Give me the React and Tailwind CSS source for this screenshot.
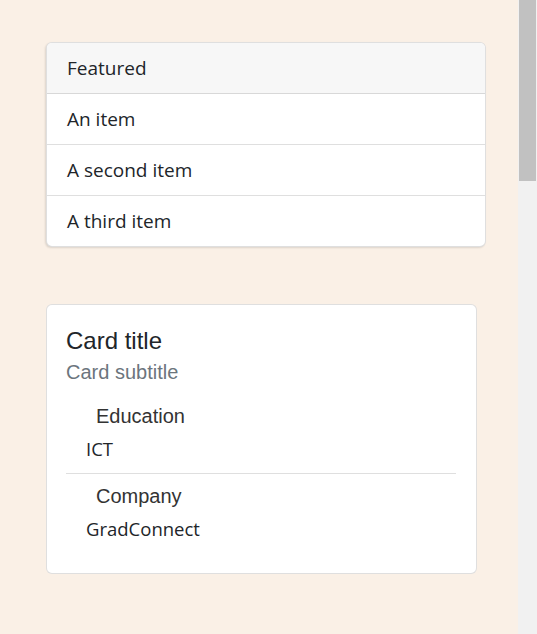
import React from 'react';

const items = ['An item', 'A second item', 'A third item'];

const segoe = { fontFamily: '"Open Sans", "Noto Sans", sans-serif' };

export default function App() {
  return (
    <div className="h-[634px] flex overflow-hidden">
      <main className="flex-1 bg-[#faf0e6] pt-[42px] pl-[46px]">
        <div className="w-[440px] rounded-md border border-black/[.125] bg-white shadow-[-1px_1px_2px_rgba(0,0,0,0.12)] overflow-hidden font-['Open_Sans',sans-serif] text-[19px] text-[#212529]">
          <div className="h-[51px] flex items-center px-5 pt-px bg-[#f7f7f7] border-b border-black/[.125]">
            Featured
          </div>
          {items.map((item, i) => (
            <div
              key={i}
              className={`flex items-center px-5 pt-px ${i < items.length - 1 ? 'h-[51px] border-b border-black/[.125]' : 'h-[50px]'}`}
            >
              {item}
            </div>
          ))}
        </div>

        <div className="mt-[57px] w-[431px] rounded-md border border-black/[.125] bg-white pl-[19px] pr-5 pt-[22px] pb-[29px] font-['Liberation_Sans',Arial,sans-serif]">
          <h5 className="text-[24px] leading-[1.2] text-[#212529] mb-[4px]">Card title</h5>
          <h6 className="text-[20px] leading-[1.2] text-[#6c757d]">Card subtitle</h6>

          <div className="mt-[17px] h-[30px] flex items-center pl-[30px] text-[20px] text-[#333]">Education</div>
          <div className="mt-[3px] h-[30px] flex items-center pl-5 text-[18.5px] text-[#212529]" style={segoe}>ICT</div>

          <hr className="mt-[9px] border-0 border-t border-black/[.125]" />

          <div className="mt-[7px] h-[30px] flex items-center pl-[30px] text-[20px] text-[#333]">Company</div>
          <div className="mt-[3px] h-[30px] flex items-center pl-5 text-[18.5px] text-[#212529]" style={segoe}>GradConnect</div>
        </div>
      </main>

      <aside className="w-[19px] bg-[#f1f1f1] px-px">
        <div className="h-[181px] bg-[#c1c1c1]" />
      </aside>
    </div>
  );
}
